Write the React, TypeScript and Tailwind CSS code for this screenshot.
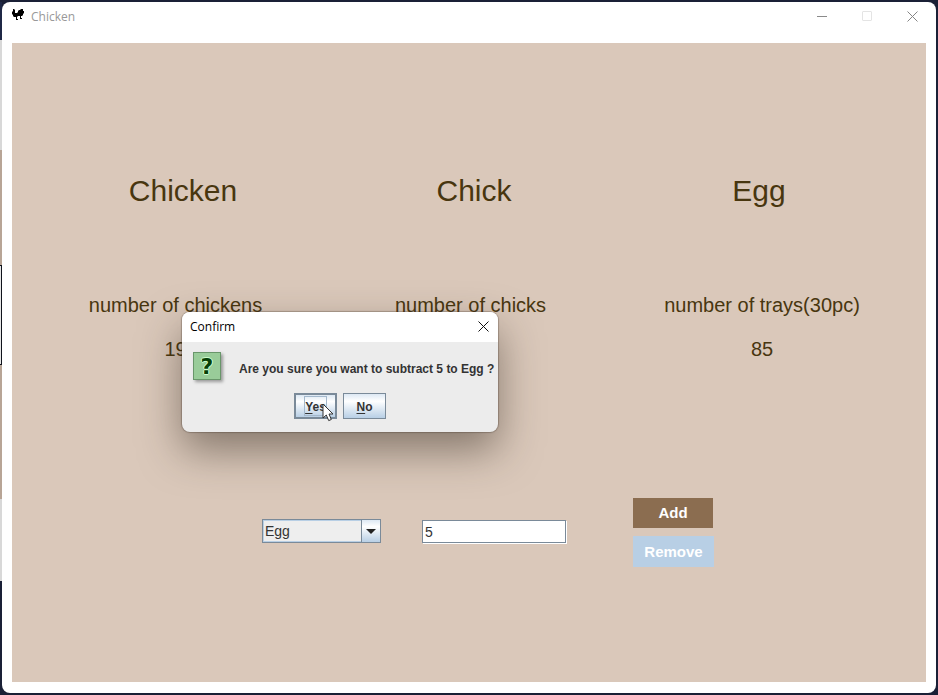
import React, { useState } from "react";

const swingFont = "font-['Liberation_Sans',Arial,sans-serif]";
const systemFont = "font-['Open_Sans','Noto_Sans',sans-serif]";

function BackdropEdge() {
  return (
    <div aria-hidden="true" className="flex w-0.5 shrink-0 flex-col bg-[#1a2036]">
      <div className="h-[38px] bg-[#1f2846]" />
      <div className="h-[110px] bg-[#d8d8d8]" />
      <div className="h-[115px] bg-[#b8a596]" />
      <div className="h-[100px] border-y border-r border-[#10141c] bg-[#e6e6e6]" />
      <div className="h-[134px] bg-[#b8a596]" />
      <div className="h-[82px] bg-[#d8d8d8]" />
    </div>
  );
}

function RoosterIcon() {
  return (
    <svg width="12" height="12" viewBox="0 0 12 12" fill="#000" aria-hidden="true">
      <path d="M1 0H2L3 1V4H5L6 3V2L7 1H8L9 0H11V2H12V4L11 5V6L10 7H9V9H10V10H8V7H6L5 8V10H6V11H4V8H2L1 7V6L0 5V3L1 2Z" />
    </svg>
  );
}

function TitleBar() {
  return (
    <header className="flex h-[41px] shrink-0 items-start justify-between pl-[9px] text-[#999999]">
      <div className="flex items-start gap-[7px] pt-[7px]">
        <RoosterIcon />
        <h1 className={`text-xs leading-4 ${systemFont}`}>Chicken</h1>
      </div>
      <div className="flex">
        <button aria-label="Minimize" className="flex h-7 w-[45px] items-center justify-center">
          <svg width="10" height="10" viewBox="0 0 10 10" stroke="#8a8a8a">
            <path d="M0 5.5H10" />
          </svg>
        </button>
        <button aria-label="Maximize" disabled className="flex h-7 w-[45px] items-center justify-center">
          <svg width="10" height="10" viewBox="0 0 10 10" fill="none" stroke="#e4e4e4">
            <rect x=".5" y=".5" width="9" height="9" rx=".5" />
          </svg>
        </button>
        <button aria-label="Close" className="flex h-7 w-[46px] items-center justify-center">
          <svg width="11" height="11" viewBox="0 0 11 11" stroke="#858585">
            <path d="M.5 .5L10.5 10.5M10.5 .5L.5 10.5" />
          </svg>
        </button>
      </div>
    </header>
  );
}

function ConfirmDialog() {
  return (
    <div
      role="dialog"
      aria-labelledby="confirm-title"
      className="absolute top-[312px] left-[182px] w-[316px] overflow-hidden rounded-lg bg-[#ececec] shadow-[0_0_1px_1px_rgba(60,45,35,0.3),0_18px_42px_rgba(50,40,30,0.5)]"
    >
      <div className="flex h-[30px] items-start justify-between bg-white pl-2">
        <h2 id="confirm-title" className={`text-xs leading-[30px] text-black ${systemFont}`}>
          Confirm
        </h2>
        <button aria-label="Close dialog" className="flex h-7 w-[30px] items-center justify-center">
          <svg width="11" height="11" viewBox="0 0 11 11" stroke="#111">
            <path d="M.5 .5L10.5 10.5M10.5 .5L.5 10.5" />
          </svg>
        </button>
      </div>
      <div className="flex items-center gap-[18px] px-[11px] pt-2.5">
        <span
          aria-hidden="true"
          className="flex size-7 shrink-0 items-center justify-center border border-[#69966a] bg-[#99cc99] font-['DejaVu_Sans',sans-serif] text-[22px] font-bold text-[#064006] shadow-[2px_2px_3px_rgba(0,0,0,0.35)] [text-shadow:1px_0_#ccffcc,-1px_0_#ccffcc,0_1px_#ccffcc,0_-1px_#ccffcc]"
        >
          ?
        </span>
        <p className="pt-1.5 text-xs font-bold whitespace-nowrap text-[#333333]">
          Are you sure you want to subtract 5 to Egg ?
        </p>
      </div>
      <div className="flex justify-center gap-1.5 pt-[13px] pb-[13px] text-xs font-bold text-[#333333]">
        <button className="relative flex h-[26px] w-[43px] items-center justify-center border-2 border-[#7a8a99] bg-linear-to-b from-[#dde8f3] via-white via-30% to-[#b8cfe5]">
          <span className="border border-[#a3b8cc] pt-0.5 leading-4">
            <u className="underline-offset-2">Y</u>es
          </span>
          <svg className="absolute top-2 left-[26px]" width="13" height="19" viewBox="0 0 13 19" aria-hidden="true">
            <path d="M1 1V15L4.3 12L6.7 17.6L9.3 16.5L7 11H11Z" fill="#fff" stroke="#333" strokeWidth="1" />
          </svg>
        </button>
        <button className="h-[26px] w-[43px] border border-[#7a8a99] bg-linear-to-b from-[#dde8f3] via-white via-30% to-[#b8cfe5] pt-0.5">
          <u className="underline-offset-2">N</u>o
        </button>
      </div>
    </div>
  );
}

function StockForm() {
  const [kind, setKind] = useState("Egg");
  const [amount, setAmount] = useState("5");
  return (
    <form
      className="flex items-start pt-[127px] pl-[250px] text-sm text-[#333333]"
      onSubmit={(event) => event.preventDefault()}
    >
      <div className="flex items-end gap-[41px] pt-[21px]">
        <div className="relative">
          <select
            aria-label="Kind"
            value={kind}
            onChange={(event) => setKind(event.target.value)}
            className="block h-6 w-[119px] appearance-none border border-[#7a8a99] bg-[#eeeeee] pl-0.5 leading-5 outline-1 -outline-offset-2 outline-[#b8cfe5]"
          >
            <option>Chicken</option>
            <option>Chick</option>
            <option>Egg</option>
          </select>
          <span className="pointer-events-none absolute inset-y-0 right-0 flex w-5 items-center justify-center border border-[#7a8a99] bg-linear-to-b from-[#dde8f3] via-white via-30% to-[#b8cfe5]">
            <svg width="10" height="5" viewBox="0 0 10 5" fill="#222" aria-hidden="true">
              <path d="M0 0H10L5 5Z" />
            </svg>
          </span>
        </div>
        <input
          aria-label="Amount"
          value={amount}
          onChange={(event) => setAmount(event.target.value)}
          className="h-[23px] w-36 border border-[#7a8a99] bg-white px-0.5 shadow-[1px_1px_0_#fff] outline-none"
        />
      </div>
      <div className="ml-[67px] flex flex-col gap-2 text-[15px] font-bold text-white">
        <button className="h-[30px] w-20 bg-[#8b6d50]">Add</button>
        <button className="h-[31px] w-[81px] bg-[#b8cfe5]">Remove</button>
      </div>
    </form>
  );
}

export default function App() {
  return (
    <div className={`flex h-screen bg-[#1a2036] pt-0.5 pr-0.5 pb-0.5 ${swingFont}`}>
      <BackdropEdge />
      <div className="flex min-w-0 flex-1 flex-col rounded-lg bg-white px-2.5 pb-[11px]">
        <div className="-mx-2.5 px-px">
          <TitleBar />
        </div>
        <main className="flex-1 bg-[#dac8ba] text-[#48360f]">
          <div className="grid grid-cols-[288fr_294fr_276fr] pt-32 pr-[29px] pl-[27px] text-center text-3xl leading-10">
            <h2>Chicken</h2>
            <h2>Chick</h2>
            <h2>Egg</h2>
          </div>
          <div className="grid grid-cols-[293fr_297fr_286fr] pt-[72px] pr-[21px] pl-[17px] text-center text-xl leading-[44px]">
            <p>number of chickens</p>
            <p>number of chicks</p>
            <p>number of trays(30pc)</p>
            <p>19</p>
            <p className="col-start-3">85</p>
          </div>
          <StockForm />
        </main>
      </div>
      <ConfirmDialog />
    </div>
  );
}
